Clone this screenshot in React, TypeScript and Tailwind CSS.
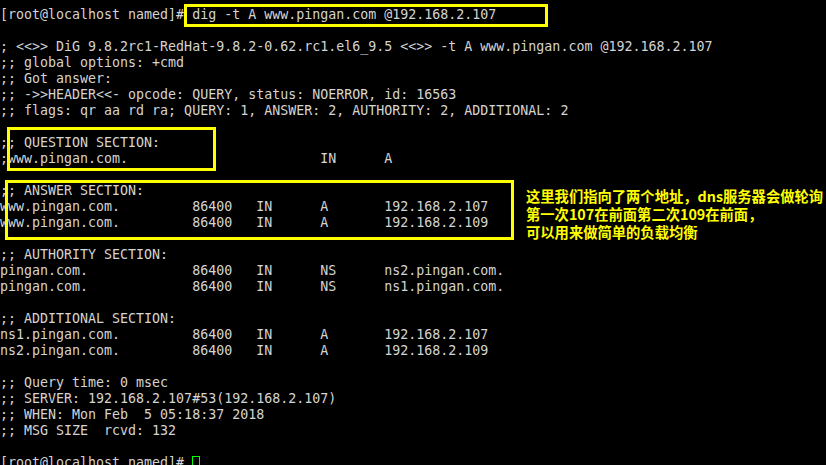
import React from 'react';

const PROMPT = '[root@localhost named]# ';

// expand tab columns like the terminal does (stops at 24/32/40/48)
function rec(name: string, ttl: string, cls: string, type: string, data: string) {
  return name.padEnd(24) + ttl.padEnd(8) + cls.padEnd(8) + type.padEnd(8) + data;
}

const lines: string[] = [
  PROMPT + 'dig -t A www.pingan.com @192.168.2.107',
  '',
  '; <<>> DiG 9.8.2rc1-RedHat-9.8.2-0.62.rc1.el6_9.5 <<>> -t A www.pingan.com @192.168.2.107',
  ';; global options: +cmd',
  ';; Got answer:',
  ';; ->>HEADER<<- opcode: QUERY, status: NOERROR, id: 16563',
  ';; flags: qr aa rd ra; QUERY: 1, ANSWER: 2, AUTHORITY: 2, ADDITIONAL: 2',
  '',
  ';; QUESTION SECTION:',
  ';www.pingan.com.'.padEnd(40) + 'IN'.padEnd(8) + 'A',
  '',
  ';; ANSWER SECTION:',
  rec('www.pingan.com.', '86400', 'IN', 'A', '192.168.2.107'),
  rec('www.pingan.com.', '86400', 'IN', 'A', '192.168.2.109'),
  '',
  ';; AUTHORITY SECTION:',
  rec('pingan.com.', '86400', 'IN', 'NS', 'ns2.pingan.com.'),
  rec('pingan.com.', '86400', 'IN', 'NS', 'ns1.pingan.com.'),
  '',
  ';; ADDITIONAL SECTION:',
  rec('ns1.pingan.com.', '86400', 'IN', 'A', '192.168.2.107'),
  rec('ns2.pingan.com.', '86400', 'IN', 'A', '192.168.2.109'),
  '',
  ';; Query time: 0 msec',
  ';; SERVER: 192.168.2.107#53(192.168.2.107)',
  ';; WHEN: Mon Feb  5 05:18:37 2018',
  ';; MSG SIZE  rcvd: 132',
  '',
];

const note = [
  '这里我们指向了两个地址，dns服务器会做轮询',
  '第一次107在前面第二次109在前面，',
  '可以用来做简单的负载均衡',
];

export default function App() {
  return (
    <div className="relative w-[826px] h-[465px] overflow-hidden bg-black">
      {/* terminal output */}
      <div
        className="pt-[7px] text-[13.3px] leading-[16px] text-[#d4d4d4] whitespace-pre"
        style={{ fontFamily: '"DejaVu Sans Mono", "Liberation Mono", monospace' }}
      >
        {lines.map((l, i) => (
          <div key={i} className="h-[16px]">{l}</div>
        ))}
        <div className="h-[16px] flex items-center">
          <span>{PROMPT}</span>
          <span className="inline-block w-[8px] h-[16px] mt-[1px] border border-[#00ff00]" />
        </div>
      </div>

      {/* yellow highlight boxes */}
      <div className="absolute left-[184px] top-[4px] w-[364px] h-[23px] border-[3px] border-[#ffff00]" />
      <div className="absolute left-[7px] top-[127px] w-[209px] h-[44px] border-[3px] border-[#ffff00]" />
      <div className="absolute left-[5px] top-[180px] w-[509px] h-[60px] border-[3px] border-[#ffff00]" />

      {/* annotation */}
      <div
        className="absolute left-[526px] top-[187px] flex flex-col text-[14.3px] leading-[18px] font-bold text-[#ffff00] whitespace-nowrap"
        style={{ fontFamily: '"Noto Sans CJK SC", sans-serif' }}
      >
        {note.map((t, i) => (
          <div key={i}>{t}</div>
        ))}
      </div>
    </div>
  );
}
